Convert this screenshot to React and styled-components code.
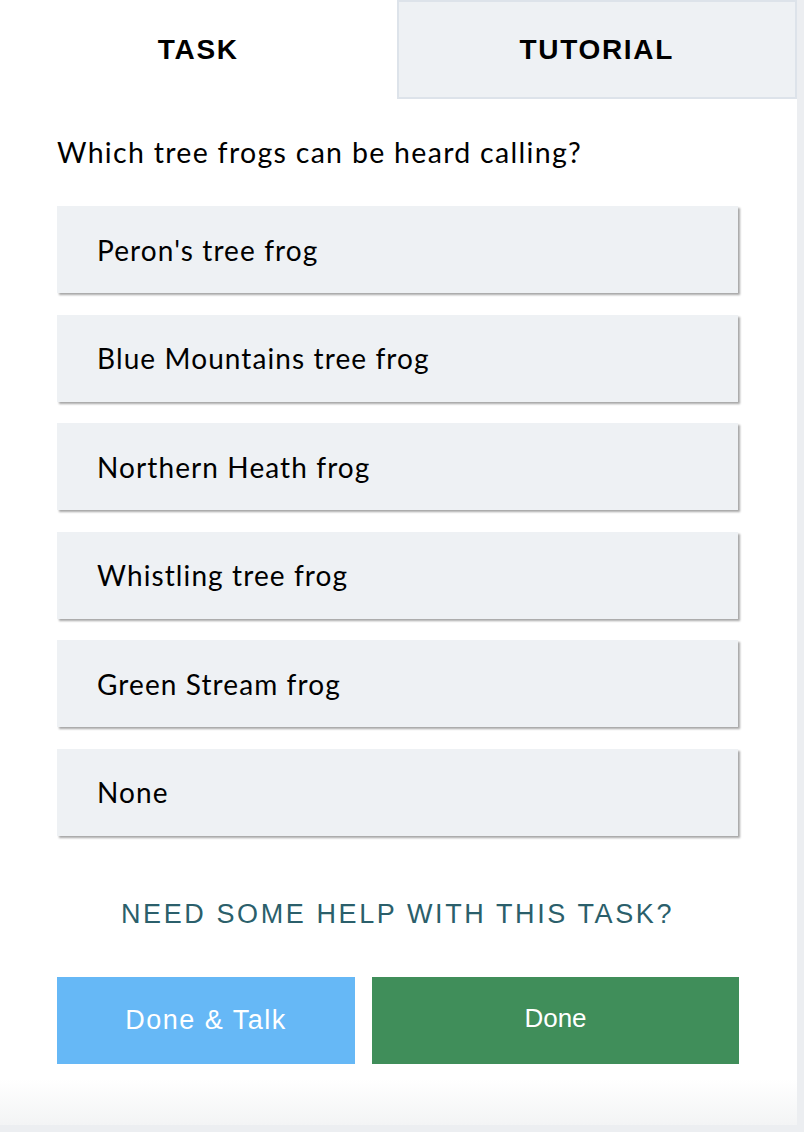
import React from 'react';
import styled, { createGlobalStyle } from 'styled-components';

const GlobalStyle = createGlobalStyle`
    html, body {
        margin: 0;
        padding: 0;
        background: #eceef1;
    }
`;

const answers = [
    "Peron's tree frog",
    'Blue Mountains tree frog',
    'Northern Heath frog',
    'Whistling tree frog',
    'Green Stream frog',
    'None',
];

export default function App() {
    return (
        <>
            <GlobalStyle />
            <Page>
                <Panel>
                    <Tabs>
                        <Tab active>TASK</Tab>
                        <Tab>TUTORIAL</Tab>
                    </Tabs>
                    <Content>
                        <Question>Which tree frogs can be heard calling?</Question>
                        <AnswerList>
                            { answers.map(answer => (
                                <Answer key={ answer }>{ answer }</Answer>
                            )) }
                        </AnswerList>
                        <HelpLink>NEED SOME HELP WITH THIS TASK?</HelpLink>
                        <Actions>
                            <ActionButton color='#66b8f6' spaced>Done &amp; Talk</ActionButton>
                            <ActionButton color='#408e5a' wide>Done</ActionButton>
                        </Actions>
                    </Content>
                    <Fade />
                </Panel>
            </Page>
        </>
    );
}

const Page = styled.div`
    width: 804px;
    height: 1132px;
    background: #eceef1;
    overflow: hidden;
`;

const Panel = styled.div`
    width: 797px;
    height: 1125px;
    background: #fff;
    display: flex;
    flex-direction: column;
`;

const Tabs = styled.div`
    display: flex;
    height: 99px;
`;

const Tab = styled.div`
    flex: 1;
    display: flex;
    align-items: center;
    justify-content: center;
    box-sizing: border-box;
    font-family: 'Liberation Sans', Arial, sans-serif;
    font-weight: bold;
    font-size: 28px;
    letter-spacing: 1.7px;
    color: #000;
    background: ${ props => props.active ? '#fff' : '#eef1f4' };
    border: ${ props => props.active ? 'none' : '2px solid #dde3ea' };
`;

const Content = styled.div`
    flex: 1;
    padding: 0 59px 0 57px;
    font-family: Lato, 'Open Sans', sans-serif;
`;

const Question = styled.div`
    margin: 37px 0 38px;
    font-size: 28.5px;
    letter-spacing: 1.3px;
    line-height: 32px;
    color: #000;
`;

const AnswerList = styled.div`
    display: flex;
    flex-direction: column;
    gap: 21.5px;
`;

const Answer = styled.div`
    height: 87px;
    display: flex;
    align-items: center;
    padding-left: 40px;
    background: #eef1f4;
    box-shadow: 2px 2px 2px rgba(0, 0, 0, 0.35);
    font-size: 28px;
    letter-spacing: 1.1px;
    color: #000;
`;

const HelpLink = styled.div`
    margin-top: 63px;
    text-align: center;
    font-family: 'Liberation Sans', Arial, sans-serif;
    font-size: 27px;
    letter-spacing: 2.6px;
    color: #2b5f6b;
`;

const Actions = styled.div`
    display: flex;
    gap: 17px;
    margin-top: 47px;
`;

const ActionButton = styled.div`
    flex: ${ props => props.wide ? '367px' : '298px' } 0 0;
    height: 87px;
    display: flex;
    align-items: center;
    justify-content: center;
    padding-bottom: ${ props => props.spaced ? '0' : '4px' };
    box-sizing: border-box;
    background: ${ props => props.color };
    color: #fff;
    font-family: 'Liberation Sans', Arial, sans-serif;
    font-size: ${ props => props.spaced ? '27px' : '26px' };
    letter-spacing: ${ props => props.spaced ? '1.5px' : '0' };
`;

const Fade = styled.div`
    height: 46px;
    background: linear-gradient(#fff, #f3f4f5);
`;
